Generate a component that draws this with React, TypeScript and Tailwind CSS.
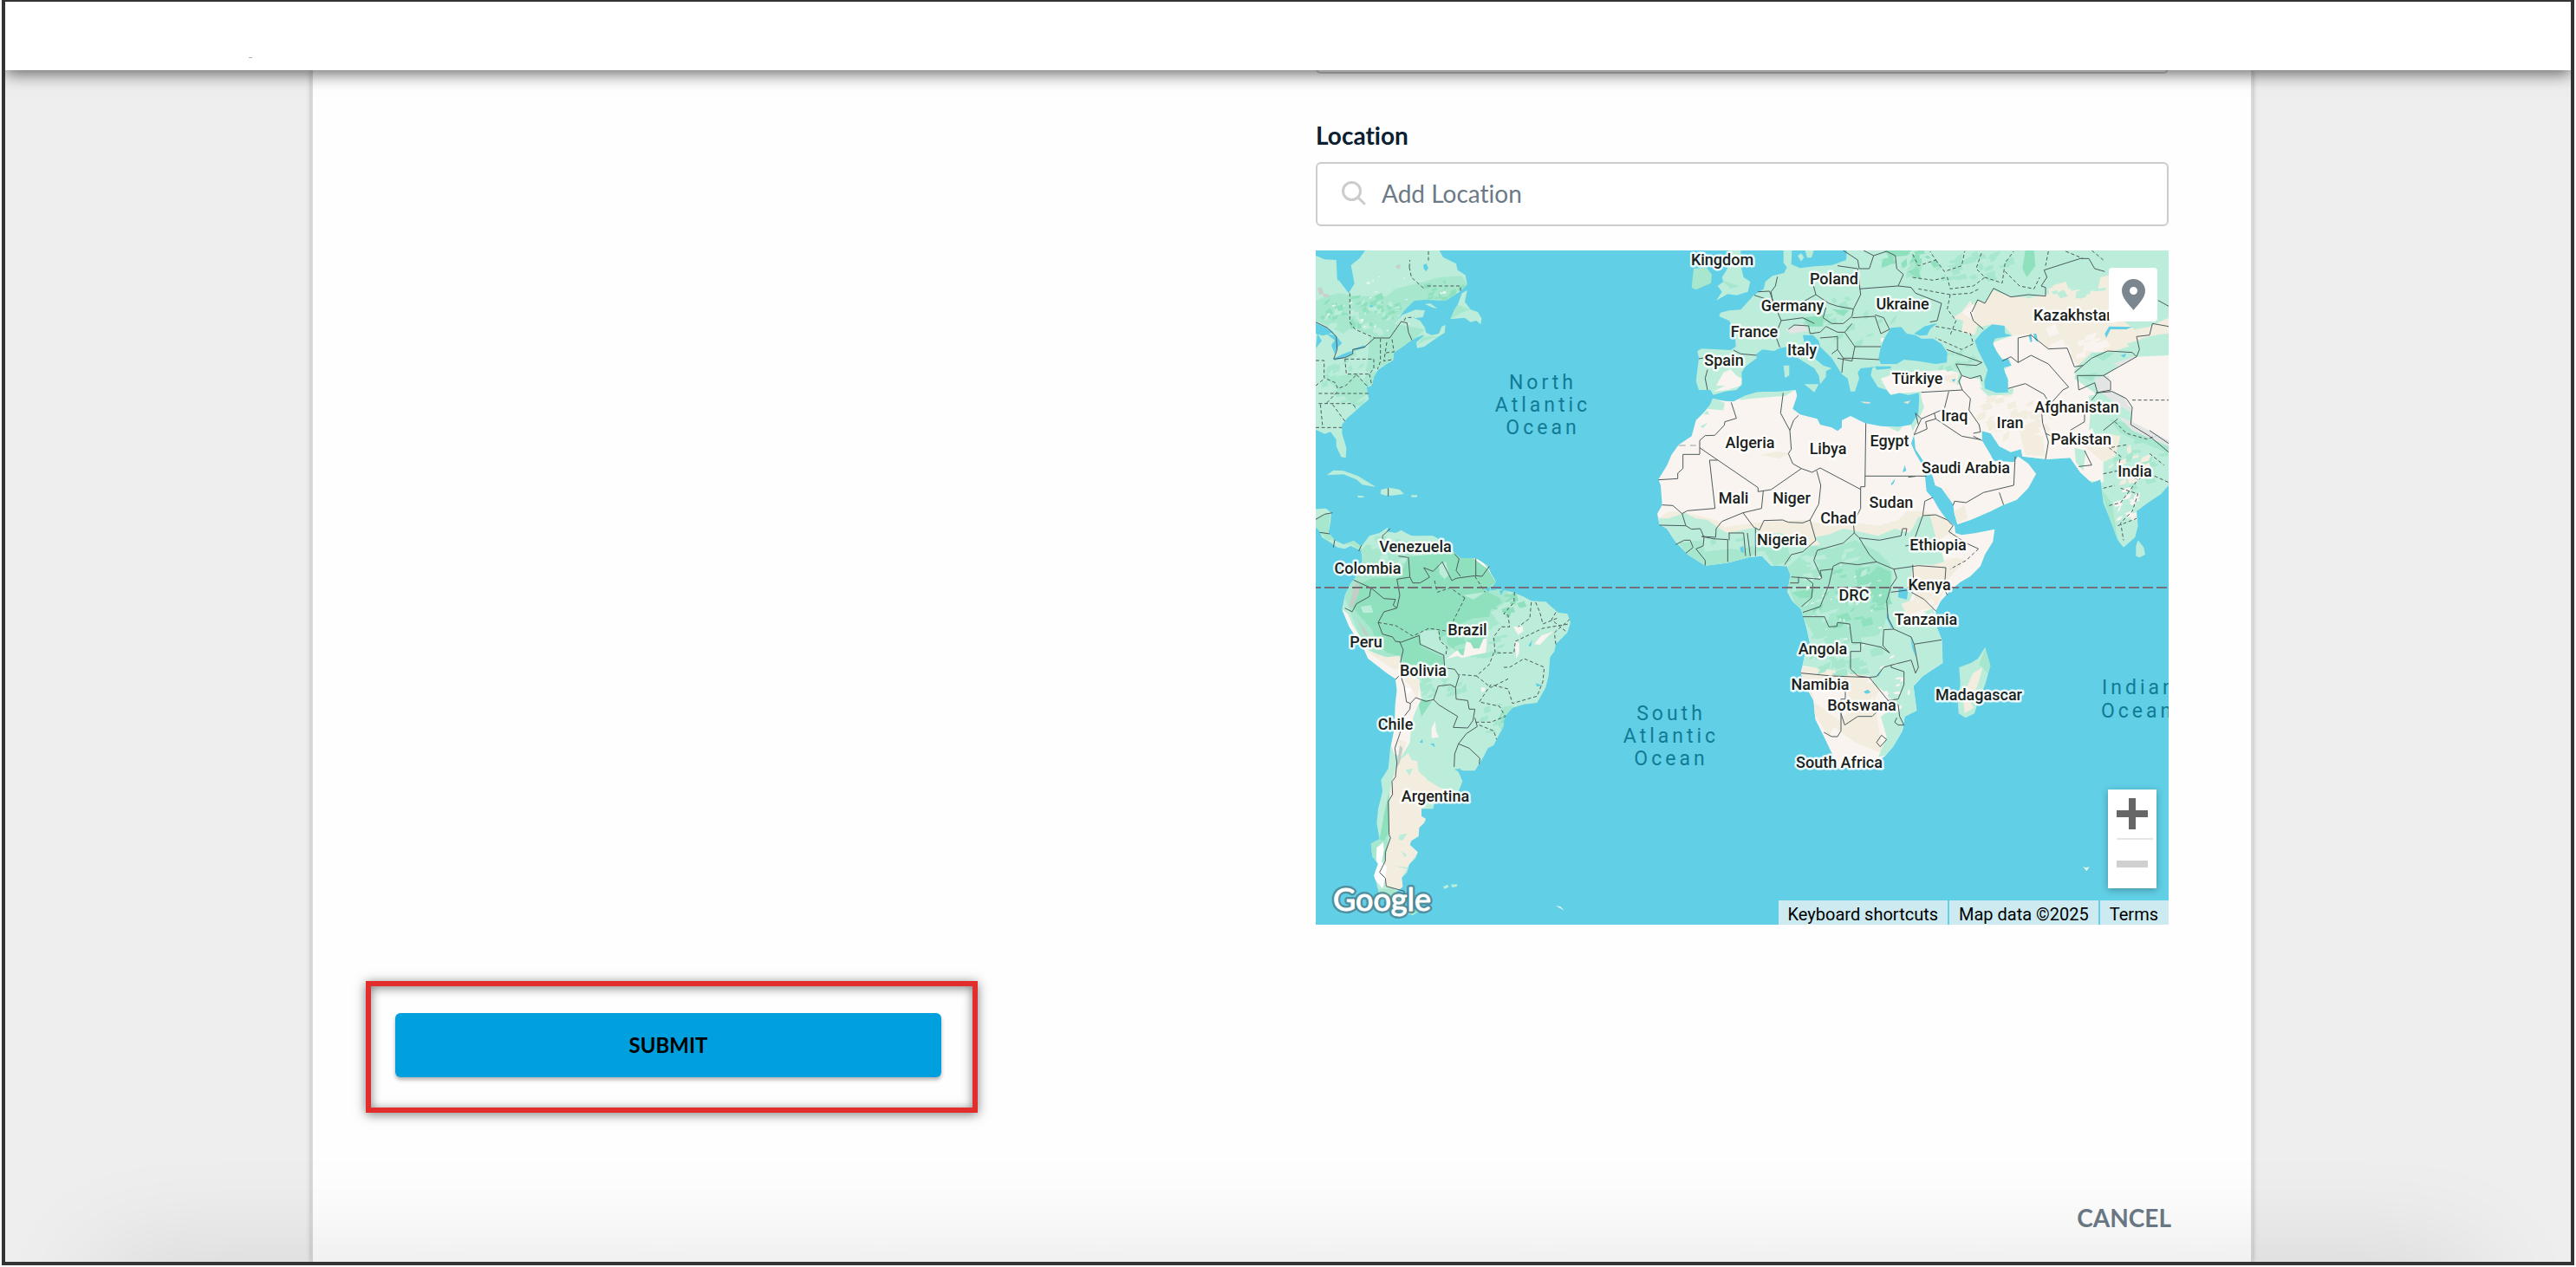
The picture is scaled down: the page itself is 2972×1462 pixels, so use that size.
import React from 'react';

const GREEN = '#bbedda';
const MID = '#a6e7cd';
const DARK = '#8fe1be';
const SAND = '#f9f4ef';
const TAN = '#f3ede0';
const WATER = '#61cfe6';

/* Scatters small deterministic shards over an ellipse to give the terrain its grain. */
function shards(seed: number, cx: number, cy: number, rx: number, ry: number, count: number, size: number) {
  let s = seed;
  const next = () => {
    s = (s * 16807) % 2147483647;
    return s / 2147483647;
  };
  let d = '';
  for (let i = 0; i < count; i++) {
    const a = next() * Math.PI * 2;
    const r = Math.sqrt(next());
    const x = Math.round(cx + Math.cos(a) * r * rx);
    const y = Math.round(cy + Math.sin(a) * r * ry);
    const w = Math.round(size * (0.4 + next()));
    const h = Math.round(size * (0.3 + next() * 0.7));
    const k = Math.round((next() - 0.5) * size);
    d += `M${x} ${y}l${w} ${-Math.round(h / 2)}l${k} ${h}l${-w} ${Math.round(h / 3)}Z`;
  }
  return d;
}

const northAmerica =
  'M54 75L85 88 125 90 128 152 168 205 188 172 176 108 205 85 225 57H482L495 80 540 103 545 125 572 142 578 175 555 198 505 230 430 228 395 230 360 265 335 300 355 280 400 262 432 265 425 288 395 292 415 300 432 325 437 345 405 358 375 375 355 390 325 410 322 437 300 450 270 470 255 495 248 525 235 530 228 500 232 545 238 572 205 600 195 610 165 635 145 660 145 690 160 740 158 775 142 772 125 735 125 712 105 685 85 692 54 678Z';
const southAmerica =
  'M210 155L240 115 275 105 305 85 300 100 330 105 350 96 385 115 460 115 500 140 530 170 555 192 608 193 650 218 660 245 677 273 655 305 690 300 735 310 772 325 800 340 850 343 892 380 925 385 936 415 925 450 885 490 880 515 865 535 860 600 850 640 830 675 820 693 775 698 735 710 708 740 702 780 690 800 670 840 650 850 635 880 605 928 565 928 535 920 550 935 562 965 548 1000 535 1030 465 1040 460 1060 420 1060 420 1085 435 1095 428 1110 412 1125 410 1155 385 1170 380 1185 407 1210 400 1230 378 1252 370 1280 352 1298 355 1330 330 1350 360 1365 362 1400 410 1415 390 1428 350 1415 310 1400 275 1360 262 1310 255 1290 270 1250 250 1225 245 1180 275 1165 265 1110 270 1060 285 1000 280 960 305 920 312 850 325 790 328 700 335 650 330 610 300 590 235 540 222 510 170 430 145 370 155 320 175 280 205 240 215 200Z';
const africa =
  'M288 570L330 578 360 580 400 560 440 548 530 545 575 540 580 560 565 605 590 625 650 640 660 660 700 670 720 682 735 670 735 645 765 630 815 655 870 665 930 668 975 660 985 695 975 725 990 760 1020 810 1028 890 1050 915 1070 950 1095 985 1125 1010 1128 1035 1150 1042 1200 1035 1264 1022 1258 1065 1230 1110 1215 1150 1180 1185 1145 1205 1110 1235 1078 1270 1059 1305 1065 1365 1081 1405 1084 1485 1016 1530 983 1565 989 1610 994 1650 953 1670 945 1720 912 1775 882 1810 845 1830 784 1845 722 1850 704 1805 673 1740 643 1680 637 1615 612 1570 593 1520 606 1460 624 1415 612 1360 594 1300 563 1270 547 1240 557 1180 545 1150 490 1148 459 1115 416 1118 343 1138 263 1148 202 1110 159 1065 129 1020 104 1005 96 968 113 938 108 870 100 850 130 800 145 765 170 730 215 700 230 645 260 615 280 590Z';
const eurasia =
  'M235 405L250 397 350 402 368 390 365 345 345 300 310 285 315 272 345 265 385 262 430 212 465 190 470 165 495 145 535 135 545 115 533 100V57H562L560 105 590 118 640 112 700 108 750 90 752 57H1866V870L1840 900 1795 930 1755 960 1760 1010 1750 1050 1710 1085 1690 1060 1660 980 1640 930 1630 850 1600 862 1560 825 1525 775 1445 780 1360 770 1355 745 1320 755 1280 735 1250 690 1220 682 1220 715 1250 765 1260 785 1330 790 1345 770 1380 795 1407 830 1380 880 1340 920 1290 940 1250 960 1180 990 1135 1005 1125 970 1120 935 1080 880 1058 870 1050 840 1020 790 990 745 985 695 975 660 1000 620 1003 560 1000 550 965 558 935 550 905 558 890 540 860 530 835 490 840 465 850 460 800 465 790 480 795 500 780 545 765 545 755 500 735 485 700 430 660 390 655 370 635 350 600 350 605 375 640 430 670 455 700 465 680 475 680 495 660 520 655 490 640 465 600 440 560 415 545 390 520 395 500 405 460 400 440 415 440 430 400 460 388 480 390 520 370 540 330 545 290 557 280 540 240 540 230 510 240 430Z';

function Lines({ d, dashed = false }: { d: string; dashed?: boolean }) {
  return (
    <path d={d} fill="none" stroke="#4d5a5c" strokeWidth="3" strokeLinejoin="round" strokeDasharray={dashed ? '12 8' : undefined} />
  );
}

function NorthAmerica() {
  return (
    <g transform="translate(-54 -57)">
      <clipPath id="clip-na">
        <path d={northAmerica} />
      </clipPath>
      <path d={northAmerica} fill={GREEN} />
      <g clipPath="url(#clip-na)">
        <path fill={MID} d="M54 230L130 205 200 215 300 215 330 190 430 165 480 150 560 145 578 175 505 230 430 228 395 230 335 300 300 340 240 352 180 320 150 345 100 320 54 300Z" />
        <path fill={MID} d="M240 360L320 310 432 330 300 450 230 480ZM90 500L200 480 240 550 180 590Z" />
        <path fill={DARK} d={shards(11, 210, 265, 160, 55, 34, 22)} />
        <path fill={DARK} d={shards(29, 480, 180, 90, 50, 18, 18)} />
        <path fill={MID} d={shards(17, 180, 500, 110, 100, 34, 26)} />
        <path fill={GREEN} d={shards(47, 230, 290, 170, 60, 30, 20)} />
        <path fill="#e4f8ef" d={shards(7, 300, 250, 230, 110, 26, 9)} />
        <path fill="#c9cfc9" d="M60 188l14-4 8 20-14 8ZM78 205l20 4 4 8-22 2ZM332 108l16-2-4 16-12-4Z" />
        <path fill={WATER} d="M426 108l10-6 8 16-8 12-8-10ZM240 246l18 3-14 6ZM128 148l22 10-20 4Z" />
        <path fill={WATER} d="M54 308L85 322 110 335 122 350 108 343 80 352 54 345ZM90 345L124 352 145 378 130 392 120 415 108 385 120 368ZM60 345L75 370 54 395ZM118 430L150 415 178 405 182 412 155 428 118 438ZM180 400L222 385 228 392 185 405ZM182 580l14 28-6-4Z" />
      </g>
      <path fill={GREEN} d="M578 195L570 235 590 262 615 270 628 292 625 313 610 300 590 305 570 290 520 295 535 260 545 245 560 205ZM432 340L455 350 480 345 490 320 503 315 500 342 480 355 455 372 430 390 405 395 402 375 425 355ZM432 243L450 240 475 258 460 255Z" />
      <path fill={MID} d="M545 245L590 262 560 272 520 295 535 260ZM425 355L480 355 430 370 405 385Z" />
      <path fill={GREEN} d="M92 835L115 818 150 820 200 838 240 862 262 876 215 868 195 850 150 832ZM280 885L310 878 345 885 360 900 320 905 295 905 278 900ZM197 905l20 2 5 5-20 1ZM385 904h20v7h-20Z" />
      <path fill={GREEN} d="M54 952L90 950 108 965 105 1000 98 1035 120 1060 150 1075 185 1062 210 1080 208 1095 175 1080 155 1090 130 1085 100 1065 75 1050 68 1030 54 1015Z" />
      <path fill={MID} d="M54 985L80 970 104 968 98 1035 120 1060 90 1058 68 1030 54 1015ZM150 1075L185 1062 212 1082 208 1095 180 1075Z" />
      <Lines d="M54 305L95 325 125 355 128 400 116 433 155 428 182 415V400L222 392 258 360H310L350 303 370 308 375 340 387 368M305 880V908M54 988L85 970 112 965M68 1033L102 1038M120 1058L115 1085M212 1078L203 1098" />
      <Lines dashed d="M444 60V95M378 115L380 90M378 115L385 150 430 190M172 205V305L190 330 258 360M440 180H555V200M360 300L365 290 395 288M54 438H83V498L122 515 130 535 158 525 195 487M155 433H255V465L240 485H160L155 433M278 362V440L268 468M318 365L325 408 290 412M300 375L290 440 318 435M54 525L85 500M64 552H238M92 585L130 545M64 587H180L195 605M70 590L78 668M112 590L155 648M54 670H145M195 487L235 530M240 485L248 525" />
    </g>
  );
}

function SouthAmerica() {
  return (
    <g transform="translate(-54 873)">
      <clipPath id="clip-sa">
        <path d={southAmerica} />
      </clipPath>
      <path d={southAmerica} fill={GREEN} />
      <g clipPath="url(#clip-sa)">
        <path fill={MID} d="M600 190L700 280 730 330 660 380 690 420 600 460 560 480 500 520 500 560 350 560 230 520 150 320 215 160 270 110Z" />
        <path fill={GREEN} d={shards(5, 330, 140, 140, 60, 34, 26)} />
        <path fill={DARK} d="M375 185L480 180 535 170 608 193 655 225 677 273 640 305 690 330 700 345 660 370 655 395 600 400 555 420 540 440 480 470 430 455 412 462 400 500 355 500 355 535 300 518 262 480 250 440 200 385 180 360 200 320 190 290 250 260 340 260Z" />
        <path fill={DARK} d="M355 490L412 462 420 500 495 535 495 560 440 575 420 560 355 560ZM505 430L600 430 645 465 640 510 560 530 510 490ZM408 690L430 680 455 690 420 740ZM700 720L770 700 708 740 700 790 680 760Z" />
        <path fill={GREEN} d="M480 210L505 205 515 250 500 265 482 245ZM415 445L480 440 480 470 510 500 495 525 420 490ZM565 320L640 310 600 335ZM210 360l35-5 8 25-35 2Z" />
        <path fill={MID} d={shards(71, 610, 470, 90, 60, 20, 26)} />
        <path fill={MID} d={shards(61, 480, 620, 90, 50, 16, 26)} />
        <path fill={DARK} d={shards(13, 700, 350, 60, 40, 14, 20)} />
        <path fill={MID} d={shards(91, 670, 740, 70, 60, 14, 24)} />
        <path fill={SAND} d="M145 370L165 385 180 420 235 510 300 540 345 530 350 595 410 610 420 680 400 720 385 760 380 830 350 880 325 870 315 840 328 760 333 650 325 610 235 540 140 400Z" />
        <path fill={TAN} d="M222 510L300 535 345 530 350 580 320 575ZM350 600L415 615 405 680 385 640ZM340 820L370 830 350 880Z" />
        <path fill={TAN} d="M345 890L375 868 385 890 405 895 410 930 440 960 465 1000 470 1040 420 1060 440 1095 412 1130 410 1155 380 1180 410 1210 378 1252 352 1298 358 1345 295 1328 290 1260 310 1160 305 1030 318 960 335 910ZM425 940L440 960 480 985 520 1000 460 1010Z" />
        <path fill={GREEN} d="M345 1150l25-5-15 25-15-5ZM350 1205l20 15-8 8ZM330 1258l45 5-10 5ZM365 925l25-5-12 25ZM430 1040l25 0 0 15-25-3Z" />
        <path fill={MID} d="M245 1180L285 1150 305 1020 305 1150 300 1200 290 1240 265 1260 245 1250ZM270 1340L320 1335 345 1360 300 1380Z" />
        <path fill={DARK} d="M308 1000V1140L290 1170 275 1165 290 1080ZM395 1400L410 1415 380 1425Z" />
        <path fill="#fff" d="M288 1175L290 1200 283 1245 300 1260 295 1300 285 1335 255 1300 262 1265 265 1195ZM362 640L385 645 372 665ZM600 193L620 193 665 245 677 275 650 230Z" />
        <path fill={SAND} d="M500 545L545 510 555 525 565 530 575 480 590 485 600 505 620 505 635 470 647 470 643 520 600 528 560 538 545 530 510 540ZM738 430L770 428 772 445 755 458ZM742 480L758 485 758 520 748 540ZM810 490L835 460 880 445 860 460 830 492ZM625 640h15v12l-12 4ZM455 780L468 755 470 790 480 812 455 815Z" />
        <path fill="#c3cec6" d="M185 290L200 270 205 310 180 365 170 360ZM195 400L240 460 225 460ZM345 840L355 850 345 900 333 920Z" />
        <path fill={WATER} d="M413 830l10-12 2 14ZM450 835l14-2 2 14ZM790 495l14-20-6 24ZM815 625l25 8-20 4ZM535 925l20-5 2 8ZM640 300l20-10-8 20ZM690 305l18-6-14 22Z" />
      </g>
      <path fill={GREEN} d="M495 1330l15-8 5 8-15 8ZM522 1322l22-1-2 8-16 3Z" />
      <path fill="#eef8f2" d="M885 1396l15 2 15 14Z" />
      <Lines d="M155 365L180 378 195 350 240 325 245 295 185 268M245 295L290 332 330 335 322 355 335 365 345 320 335 265 380 258 375 190 340 185M335 365L290 378 270 415 285 455 320 465 330 480 350 483 412 460 415 490 497 528 500 572 535 577 550 600 538 640 540 680 580 685 585 715 605 715 598 755 580 780 530 778 545 740 480 700 462 682 435 688 400 675 382 695 368 690 360 635 350 605 348 550 357 510 345 483M380 258L390 278 415 278 448 258 428 225 460 238 492 205 510 240 525 270 540 262 605 253 630 255 655 220M608 193V253M535 178L550 195 540 235 555 255M285 130V115L312 90M462 682L478 635 520 630 538 640M605 745L613 775 575 800 548 835 535 870 533 915M548 835L585 850 622 885 620 905M382 695L380 715 360 740 345 800 328 850 335 900 330 950 318 965 320 1010 305 1035 308 1150 313 1160 295 1210V1240L275 1280 295 1300 298 1328 360 1345V1420M330 612L342 600" />
      <Lines dashed d="M570 330L550 370 530 410M270 415L330 425 390 462 445 435 510 445M480 445L485 480 508 500 505 525M742 310L740 345 705 385 720 390 725 430 695 430 670 465 675 520H740L745 480M800 345L795 400 755 430M815 345L830 380 840 420 890 400M745 480L840 435 930 420M885 380L870 405 925 450M885 490L880 450 932 405M670 520L655 560 610 600 550 595M610 600L660 640 720 610M705 570H725L775 540 845 570 840 620 820 670 735 695 720 645 660 630 620 690 690 705 710 740 660 760H605M465 270L475 310 520 295 570 330M605 255L640 310M620 770L670 790 680 820" />
    </g>
  );
}

function Africa() {
  return (
    <g transform="translate(1086 -57)">
      <clipPath id="clip-af">
        <path d={africa} />
      </clipPath>
      <path d={africa} fill={SAND} />
      <g clipPath="url(#clip-af)">
        <path fill={TAN} d="M96 985L140 960 200 965 300 990 330 1015 430 1000 600 990 650 1000 690 1010 780 1000 860 1010 930 990 960 960 1010 960 1060 970 1110 990 1120 1030 1000 1100 700 1100 300 1050 96 1010ZM960 1160L1050 1140 1130 1120 1160 1130 1100 1200 1060 1300 980 1300 990 1230ZM450 765l60-12 40 5-30 20ZM1060 1500L900 1500 850 1610 860 1700 880 1800 780 1760 700 1700 780 1640 740 1560 620 1540 640 1620 720 1680 690 1740 600 1600 590 1500Z" />
        <path fill={GREEN} d="M100 985L135 985 190 965 230 985 270 990 320 1025 340 1035 440 1015 450 1040 520 1035 600 1060 625 1080 660 1075 640 1050 690 1040 740 1020 790 1030 860 1045 920 1020 970 1035 1000 980 1040 975 1060 1050 1080 1100 1090 1135 1050 1145 985 1145 975 1180 985 1230 970 1270 950 1290 960 1330 1040 1300 1110 1280 1100 1500 1016 1530 983 1565 1000 1700 953 1670 945 1720 912 1800 862 1810 890 1740 870 1670 915 1640 890 1590 850 1560 830 1530 700 1510 600 1495 560 1400 500 1200 300 1200 90 1020Z" />
        <path fill={GREEN} d="M288 565L330 585 325 610 260 605ZM380 575L400 550 535 540 575 538 540 560 420 570ZM895 668L930 655 945 668 930 685ZM275 625L255 625 270 610ZM245 665l25-12-15 20Z" />
        <path fill={MID} d="M540 1160L630 1080 700 1090 780 1060 860 1100 900 1140 910 1180 900 1290 880 1360 860 1390 780 1400 640 1390 600 1330 560 1250 545 1200ZM170 1070L250 1060 260 1100 350 1090 440 1100 400 1130 260 1150 200 1110ZM455 1080L540 1060 560 1130 500 1150Z" />
        <path fill={DARK} d="M780 1160L830 1180 860 1150 905 1170 900 1260 910 1280 860 1290 840 1240 790 1220ZM560 1240L640 1230 630 1260 590 1260Z" />
        <path fill={DARK} d={shards(19, 740, 1250, 120, 110, 20, 28)} />
        <path fill={MID} d={shards(37, 720, 1440, 120, 90, 30, 30)} />
        <path fill={GREEN} d={shards(53, 690, 1210, 140, 150, 30, 26)} />
        <path fill="#e8f7ee" d={shards(83, 740, 1280, 150, 170, 26, 9)} />
        <path fill={SAND} d={shards(31, 900, 1560, 80, 110, 16, 18)} />
        <path fill={MID} d={shards(41, 300, 1090, 150, 40, 14, 24)} />
        <path fill={SAND} d={shards(43, 1020, 1310, 50, 40, 14, 26)} />
        <path fill={TAN} d="M940 1280L985 1265 1020 1300 960 1320ZM1050 990L1110 1010 1120 1040 1060 1040Z" />
        <path fill={WATER} d="M932 1228H965L960 1265 930 1258ZM892 1305L900 1335 912 1365 905 1362 890 1330ZM972 1390L985 1430 990 1468 978 1430ZM945 825l8-25 5 20ZM905 865l15-18-5 15-8 8ZM382 1085l12-5 2 25-10-5ZM855 1528l20-18-14 22ZM810 1585l15-8 10 10-15 5Z" />
      </g>
      <path d="M1231 1430L1249 1495 1231 1560 1206 1620 1194 1660 1163 1675 1139 1660 1136 1610 1145 1560 1141 1500 1182 1485 1206 1470Z" fill={GREEN} />
      <path d="M1190 1520L1222 1500 1206 1560 1180 1620 1190 1640 1160 1660 1155 1600 1180 1540Z" fill={TAN} />
      <path d="M1231 1435L1249 1495 1240 1520 1210 1490Z" fill={MID} />
      <path d="M1568 2188l10 6 14-3-10 15Z" fill="#e6f6e9" />
      <Lines d="M352 583L370 638 330 650 328 662 295 697 262 698 243 715V763H185V812L167 828V847L100 851M243 740L445 878V892M305 783H277L296 950 200 958 182 968 150 940 113 938M445 892L490 885 595 812 565 795 550 760 560 745 555 680 523 620 532 550M555 680L568 645 585 628M595 812L632 825 660 810 800 884M818 655L815 875H800V950L775 1000 778 1035M648 820L662 870 655 935 625 990 600 1000 550 998 530 990 465 992 450 1025 430 1015 393 965 320 995 300 1020 298 1050 250 1047M463 890L457 950 393 965M815 838H990M1028 838H995L965 842M1050 912L1022 925 1015 975 980 1075 955 1080M1015 975L1060 972 1100 990 1120 1010 1105 1030 1165 1070 1208 1090M778 1035L795 1052 865 1060 940 1045 945 1020 960 1020 955 1045M778 1035L740 1070 650 1095 638 1130 665 1190 660 1195 560 1187M795 1052L830 1110 855 1135 915 1160 1000 1148 1095 1155M625 990L645 1060 600 1100 560 1110 537 1145M104 1008L195 1010 215 1022 245 1020 258 1050 255 1080 230 1090 262 1130V1148M195 1010L182 968M250 1047L290 1055 340 1058V1135M343 1035H395L402 1115M408 1035L418 1115M436 1020V1115M160 1075L190 1060 210 1060 220 1085 195 1105M345 1035V1060M705 1150L690 1215 660 1290 600 1310M705 1150L730 1138 790 1145 855 1135M556 1208H585V1187M610 1190L635 1210 630 1260 595 1290M665 1190L660 1165 705 1160M915 1160L925 1190 905 1220 890 1270 895 1330 915 1368 975 1395 985 1420 1000 1500 990 1520 975 1475 907 1492 905 1500 950 1515V1560L930 1610 895 1615 830 1535 855 1532 880 1500 907 1492M980 1145L985 1230 905 1240M975 1240L1020 1265 1060 1305M1095 1155L1090 1230 1100 1250M985 1420L1080 1405M915 1368L880 1370 877 1425 900 1450 870 1430 800 1415 770 1415 762 1350 720 1345 718 1358 690 1360 675 1325H600M800 1415V1445H765V1505L790 1530 830 1535M593 1520L700 1530 830 1535M747 1540V1610H732V1720L720 1740 700 1740 673 1725M732 1660L745 1700 790 1670 840 1670 895 1615M895 1615L930 1630 935 1670 950 1700H930L918 1690 925 1675M855 1760L872 1735 890 1750 868 1775Z" />
      <Lines dashed d="M1208 1090L1165 1130 1110 1160" />
      <path d="M170 732h60" stroke="#b9bcb6" strokeWidth="5" strokeDasharray="24 16" fill="none" />
    </g>
  );
}

function Eurasia() {
  return (
    <g transform="translate(1086 -57)">
      <clipPath id="clip-ea">
        <path d={eurasia} />
      </clipPath>
      <path d={eurasia} fill={GREEN} />
      <g clipPath="url(#clip-ea)">
        <path fill={MID} d={shards(3, 750, 300, 170, 80, 20, 26)} />
        <path fill={DARK} d={shards(23, 960, 90, 90, 40, 20, 26)} />
        <path fill={MID} d={shards(33, 1150, 110, 220, 50, 34, 26)} />
        <path fill={DARK} d="M880 57H975L960 75 900 80ZM960 130L1000 115 1010 160ZM1360 120L1370 57 1400 57 1405 110 1375 150ZM600 290L670 280 670 320 620 320ZM700 260L760 265 740 285Z" />
        <path fill={TAN} d="M1120 290L1150 270 1180 230 1210 300 1195 350 1150 340 1155 300ZM1180 300L1185 270 1205 232 1230 238 1260 195 1320 218 1400 218 1440 185 1510 165 1520 190 1620 198 1630 150 1670 140 1670 270 1760 340 1866 290V345L1790 350 1740 385 1680 405 1600 410 1550 460 1515 405 1445 395 1390 350 1345 360V440L1260 400V380L1325 352 1298 318 1255 313 1220 320 1200 310Z" />
        <path fill={GREEN} d={shards(59, 1480, 190, 160, 20, 18, 30)} />
        <path fill={SAND} d="M1260 375L1325 352 1390 345 1450 398 1515 405 1550 455 1540 500 1610 550 1600 640 1605 690 1640 740 1640 860 1560 850 1520 780 1400 960 1120 1020 1000 870 970 700 1003 640 1010 545 1145 520 1150 490 1210 500 1225 545 1310 560 1310 500 1295 470 1322 455 1260 405ZM870 500L930 480 1100 470 1140 480 1130 530 1010 545 900 555 880 520Z" />
        <path fill={SAND} d="M1650 470L1755 425 1866 420V720L1800 700 1740 670 1735 600 1670 560 1645 520Z" />
        <path fill={TAN} d={shards(67, 1330, 620, 130, 90, 34, 34)} />
        <path fill={TAN} d="M1350 680L1430 700 1440 770 1370 765ZM1080 850L1120 930 1100 900ZM1520 700L1600 700 1640 690 1700 700 1680 770 1640 790 1580 740ZM1060 500L1135 480 1130 520ZM1750 330L1866 310V340L1780 360ZM1120 960L1160 940 1170 985 1135 1000Z" />
        <path fill={SAND} d={shards(73, 1500, 380, 120, 60, 16, 34)} />
        <path fill={GREEN} d="M1210 530L1260 545 1330 535 1325 555 1240 560ZM1540 470L1600 410 1700 405 1755 425 1700 450 1650 490 1550 510ZM1720 380L1790 360 1866 370V395L1760 410ZM1590 560L1660 550 1690 600 1650 640 1590 680 1595 620ZM1100 440L1190 400 1230 440 1235 500 1180 500ZM1003 545L1020 600 1000 640ZM1540 740L1580 750 1570 820 1545 790Z" />
        <path fill={MID} d="M1600 415L1680 410 1640 440ZM1550 490L1620 480 1600 510ZM1660 640L1740 660 1866 730V760L1700 690ZM1630 880L1670 930 1690 1060 1660 980Z" />
        <path fill={MID} d={shards(79, 1750, 800, 90, 90, 16, 24)} />
        <path fill={TAN} d={shards(97, 1720, 800, 70, 60, 16, 26)} />
        <path fill={SAND} d={shards(101, 1710, 930, 40, 70, 12, 22)} />
        <path fill="#e3e5e4" d="M1610 500L1660 490 1660 540 1710 560 1740 620 1690 590 1620 540ZM1690 630L1740 650 1866 715V735L1740 680ZM1670 450L1760 420 1700 455ZM540 330L600 310 620 335 560 345Z" />
        <path fill={SAND} d="M325 480L350 468 370 490 388 500 385 525 340 540 290 545 330 525 300 525ZM1150 270L1195 240 1190 300ZM870 360h15v14h-15Z" />
        <path fill={MID} d={shards(89, 1110, 430, 90, 40, 20, 18)} />
      </g>
      <path fill={WATER} d="M868 400L880 365 905 325 940 322 960 345 990 350 1010 362 1050 362 1080 380 1100 410 1098 445 1060 450 1000 440 950 435 925 450 870 450 862 430ZM985 345L1020 320 1065 308 1040 330 1030 350 1005 352ZM850 458h55v8l-50 4Z" />
      <path fill={WATER} d="M1195 370L1220 340 1255 313 1298 318 1300 345 1325 352 1265 362 1258 380 1270 405 1290 435 1310 430 1322 455 1295 462 1300 480 1310 505V548L1270 550 1230 535 1228 510 1240 470 1220 430 1205 400ZM1645 345L1660 320 1740 322 1720 330 1665 330 1650 360ZM1382 355l8-12 4 30-6 2ZM1398 345l10 0 6 30-10-8ZM1700 420l20-6-8 14ZM1115 505l14-4-6 12Z" />
      <path fill={GREEN} d="M350 57H385V110L395 150 418 165 410 200 370 212 340 208 300 230 320 200 305 180 325 165 320 150 345 110ZM608 57H638L630 82H615ZM582 75l12-8 10 14-10 14ZM533 455h20v35l-15 8ZM605 520H655L640 548ZM1760 1060L1780 1085 1785 1110 1765 1120 1753 1115V1080Z" />
      <path fill={MID} d="M222 120L265 115 285 140 282 170 230 193 215 185ZM320 160L380 180 350 190Z" />
      <path fill="#e9e2d5" d="M800 580l35 2-5 5-20-1ZM948 582l25-5-10 12Z" />
      <Lines d="M360 402L385 415 440 420M270 470L262 500 270 540M240 432L262 428M432 212L495 232 490 200 505 180 512 148M445 200L485 198 500 240 525 300 515 325 505 350 520 392M525 300L600 290 640 310M550 330L570 315 620 318 625 345 660 340 680 320M637 180L645 210 690 240 720 250 775 260 800 210 790 120 720 110M645 210L600 235M680 255L670 290 700 310 740 310 770 285 775 260M740 57L790 90 795 120 830 120 845 75 810 57M845 75L890 60 920 75 925 120 948 140 930 180 795 190M770 290L850 285 870 345 900 330 880 290 850 280M680 320L720 340 745 340 770 310M660 360L720 355V400L700 415M745 340L780 390 770 440 720 430M780 390L870 390M720 400L740 430 735 480M740 430L770 430 865 435M930 180L975 185 990 205 1080 240 1065 300 1040 305M1130 450L1150 490 1180 500 1215 490 1220 510M1098 400L1220 445 1200 455 1130 450M1150 490L1140 510 1152 540 1010 548M1152 540L1180 570 1175 610 1210 660 1215 685M1105 545L1090 605 1010 640 990 620M1010 640L985 695 1030 675 1025 650 1060 640 1055 620M1060 640L1150 700 1215 712M1190 690L1215 685M1185 270L1205 228 1230 240 1260 188 1320 218 1380 210 1440 215 1440 185 1425 180 1445 150 1435 125 1560 85H1590L1610 120 1645 130M1180 270L1190 300 1225 330M1345 445V360L1390 350 1450 398 1515 395 1540 460 1570 455M1290 440L1320 425 1345 445 1390 420 1450 450 1520 530 1500 540 1455 590 1435 555 1370 518 1310 535M1540 480L1600 430 1655 405 1740 410 1755 425 1640 490 1550 490 1555 540 1610 515 1620 550 1600 575M1755 425L1765 400 1755 355 1800 350 1810 310 1866 320M1640 490L1665 510V540L1615 550 1670 545 1720 570 1740 600 1735 660 1800 700 1866 755M1425 600L1430 655 1450 720 1440 780M1440 690L1460 700M1525 680L1575 650V620M1575 750L1600 800 1555 805M1690 640L1640 680M1800 680L1866 725M1335 770L1330 870 1225 895 1165 930 1125 925 1120 940M1280 895L1295 938M1670 230L1700 200M1830 230L1866 250M1220 715L1190 700M990 620L1000 660" />
      <Lines dashed d="M980 70L1000 110 1060 90 1040 60M1060 90L1090 130 1150 110 1160 60M980 150L1050 160 1100 150 1110 190 1190 180 1230 150 1200 120 1220 60M1000 190L1110 210 1180 205 1210 190M1110 210L1100 260 1130 300 1110 350M1060 320L1120 330 1180 345 1190 380 1150 400 1060 360M1230 150L1290 170 1300 100 1330 60M1300 130L1350 180 1400 190 1420 150M1450 60L1440 110M1510 60L1570 85M1600 57L1640 90M1740 575H1866M1680 650L1720 690 1790 710 1820 700M1640 830L1690 820 1700 770 1660 740 1720 730M1690 820L1760 850 1800 830 1866 860M1700 880L1760 900 1740 960 1700 1000 1710 1060M1660 940L1700 930 1760 850M1690 1010L1755 985M1800 760L1850 800M1640 880L1680 870" />
    </g>
  );
}

type Label = [text: string, x: number, y: number, anchor?: 'start'];

const countries: Label[] = [
  ['Kingdom', 469, 17], ['Poland', 598, 39], ['Germany', 550, 70], ['Ukraine', 677, 68],
  ['France', 506, 100], ['Italy', 561, 121], ['Spain', 471, 133], ['Türkiye', 694, 154],
  ['Iraq', 737, 197], ['Algeria', 501, 228], ['Libya', 591, 235], ['Egypt', 662, 226],
  ['Saudi Arabia', 750, 257], ['Mali', 482, 292], ['Niger', 549, 292], ['Sudan', 664, 297],
  ['Chad', 603, 315], ['Nigeria', 538, 340], ['Ethiopia', 718, 346], ['Kenya', 708, 392],
  ['DRC', 621, 404], ['Tanzania', 704, 432], ['Angola', 585, 466], ['Namibia', 582, 507],
  ['Botswana', 630, 531], ['Madagascar', 765, 519], ['South Africa', 604, 597],
  ['Venezuela', 115, 348], ['Colombia', 60, 373], ['Brazil', 175, 444], ['Peru', 58, 458],
  ['Bolivia', 124, 491], ['Chile', 92, 553], ['Argentina', 138, 636],
  ['Kazakhstan', 828, 81, 'start'], ['Afghanistan', 878, 187], ['Iran', 801, 205],
  ['Pakistan', 883, 224], ['India', 945, 261],
];

const oceans: Label[] = [
  ['North', 262, 160], ['Atlantic', 262, 186], ['Ocean', 262, 212],
  ['South', 410, 542], ['Atlantic', 410, 568], ['Ocean', 410, 594],
  ['Indian', 907, 512, 'start'], ['Ocean', 906, 539, 'start'],
];

function WorldMap() {
  return (
    <svg viewBox="0 0 984 778" preserveAspectRatio="xMidYMid slice" className="block size-full bg-[#61cfe6]" role="img" aria-label="World map">
      <g transform="scale(0.33333)">
        <NorthAmerica />
        <SouthAmerica />
        <Africa />
        <Eurasia />
      </g>
      <path d="M0 389H984" stroke="#746f78" strokeWidth="2" strokeDasharray="12 4" strokeDashoffset="6" />
      <g className="font-['Roboto',sans-serif] text-[23px] tracking-[4px]" fill="#117b96">
        {oceans.map(([text, x, y, anchor]) => (
          <text key={text + x} x={x} y={y} textAnchor={anchor ?? 'middle'}>{text}</text>
        ))}
      </g>
      <g className="font-['Roboto',sans-serif] text-[18px] font-medium" fill="#1b1f20" stroke="#ffffff" strokeOpacity="0.85" strokeWidth="5" strokeLinejoin="round" paintOrder="stroke">
        {countries.map(([text, x, y, anchor]) => (
          <text key={text} x={x} y={y} textAnchor={anchor ?? 'middle'}>{text}</text>
        ))}
      </g>
      <g className="font-['Lato',sans-serif] text-[36px]" strokeLinejoin="round">
        <text x="20" y="762" fill="none" stroke="#4c7f8c" strokeOpacity="0.8" strokeWidth="6">Google</text>
        <text x="20" y="762" fill="#fff" stroke="#fff" strokeWidth="1">Google</text>
      </g>
    </svg>
  );
}

export default function App() {
  return (
    <div className="flex min-h-screen bg-[#fafafa] px-[2px] pb-[2px] font-['Lato',sans-serif] [font-variant-ligatures:none]">
      <div className="relative flex flex-1 flex-col overflow-hidden border-4 border-t-2 border-[#333333] bg-[#eeeeee]">
        <header className="relative z-10 h-[79px] shrink-0 bg-white shadow-[0_4px_18px_rgba(0,0,0,0.6)]">
          <span className="absolute top-[64px] left-[281px] h-px w-[4px] bg-[#b0b0b0]" />
        </header>
        <main className="flex flex-1 justify-center pr-[14px]">
          <form className="flex w-full max-w-[2240px] flex-col border-x-2 border-[#d5dce1] bg-[#fefefe] px-[95px] shadow-[0_0_6px_rgba(0,0,0,0.25)]" onSubmit={(e) => e.preventDefault()}>
            <div className="grid grid-cols-2 gap-x-[78px]">
              <section className="col-start-2 flex flex-col">
                <div className="-mt-[12px] h-[16px] rounded-b-[6px] border-2 border-t-0 border-[#cccccc]" />
                <label htmlFor="location" className="mt-[53px] text-[28px] leading-[36px] font-bold text-[#0b2030]">
                  Location
                </label>
                <div className="mt-[13px] flex h-[74px] items-center rounded-[6px] border-2 border-[#cccccc] bg-white pb-[2px] pl-[28px]">
                  <svg viewBox="0 0 28 28" className="size-[28px] shrink-0" fill="none" stroke="#cccccc" strokeWidth="3" strokeLinecap="round" aria-hidden="true">
                    <circle cx="11.5" cy="11.5" r="10" />
                    <path d="M19 19l7 7" />
                  </svg>
                  <input id="location" type="text" placeholder="Add Location" className="ml-[18px] min-w-0 flex-1 bg-transparent text-[28px] leading-[36px] outline-none placeholder:text-[#6b7a86]" />
                </div>
                <div className="relative mt-[28px] aspect-[984/778] overflow-hidden">
                  <WorldMap />
                  <button type="button" aria-label="Drop a pin" className="absolute top-[20px] right-[13px] flex h-[62px] w-[56px] items-center justify-center rounded-[4px] bg-white">
                    <svg viewBox="0 0 54 72" className="h-[36px] w-[27px]" fill="#7b868f" fillRule="evenodd" aria-hidden="true">
                      <path d="M27 0C12 0 0 12 0 27c0 17 16 31 27 45 11-14 27-28 27-45C54 12 42 0 27 0ZM27 18a9 9 0 1 1 0 18 9 9 0 0 1 0-18Z" />
                    </svg>
                  </button>
                  <div className="absolute right-[14px] bottom-[42px] flex w-[56px] flex-col bg-white shadow-[0_2px_8px_rgba(0,0,0,0.3)]">
                    <button type="button" aria-label="Zoom in" className="flex h-[56px] items-center pl-[10px]">
                      <svg viewBox="0 0 36 36" className="size-[36px]" fill="#666666" aria-hidden="true">
                        <path d="M14 0h8v14h14v8H22v14h-8V22H0v-8h14Z" />
                      </svg>
                    </button>
                    <div className="mr-[4px] ml-[10px] h-[2px] bg-[#e6e6e6]" />
                    <button type="button" aria-label="Zoom out" className="flex h-[56px] items-center pl-[10px]">
                      <svg viewBox="0 0 36 8" className="h-[8px] w-[36px]" fill="#d0d0d0" aria-hidden="true">
                        <path d="M0 0h36v8H0Z" />
                      </svg>
                    </button>
                  </div>
                  <div className="absolute right-0 bottom-0 flex h-[28px] gap-[2px] font-['Roboto',sans-serif] text-[20px] leading-[32px] text-black">
                    <button type="button" className="bg-[#cdeaf0] px-[11px]">Keyboard shortcuts</button>
                    <span className="bg-[#cdeaf0] px-[11px]">Map data ©2025</span>
                    <a href="#terms" className="bg-[#cdeaf0] pr-[12px] pl-[11px]">Terms</a>
                  </div>
                </div>
              </section>
            </div>
            <div className="mt-[65px] -ml-[34px] w-[706px] max-w-full border-[6px] border-[#e32d2d] pt-[31px] pr-[36px] pb-[35px] pl-[28px] shadow-[0_2px_12px_rgba(0,0,0,0.5),inset_0_2px_12px_rgba(0,0,0,0.5)]">
              <button type="submit" className="h-[74px] w-full rounded-[6px] bg-[#009fdd] text-[24px] font-bold text-black shadow-[0_3px_4px_rgba(0,0,0,0.3)]">
                SUBMIT
              </button>
            </div>
            <button type="button" className="mt-[103px] -mr-[3px] self-end text-[28px] leading-[36px] font-bold text-[#6b7a86]">
              CANCEL
            </button>
          </form>
        </main>
        <div className="pointer-events-none absolute inset-x-[110px] top-full h-[100px] shadow-[0_0_130px_rgba(0,0,0,0.12)]" />
      </div>
    </div>
  );
}
